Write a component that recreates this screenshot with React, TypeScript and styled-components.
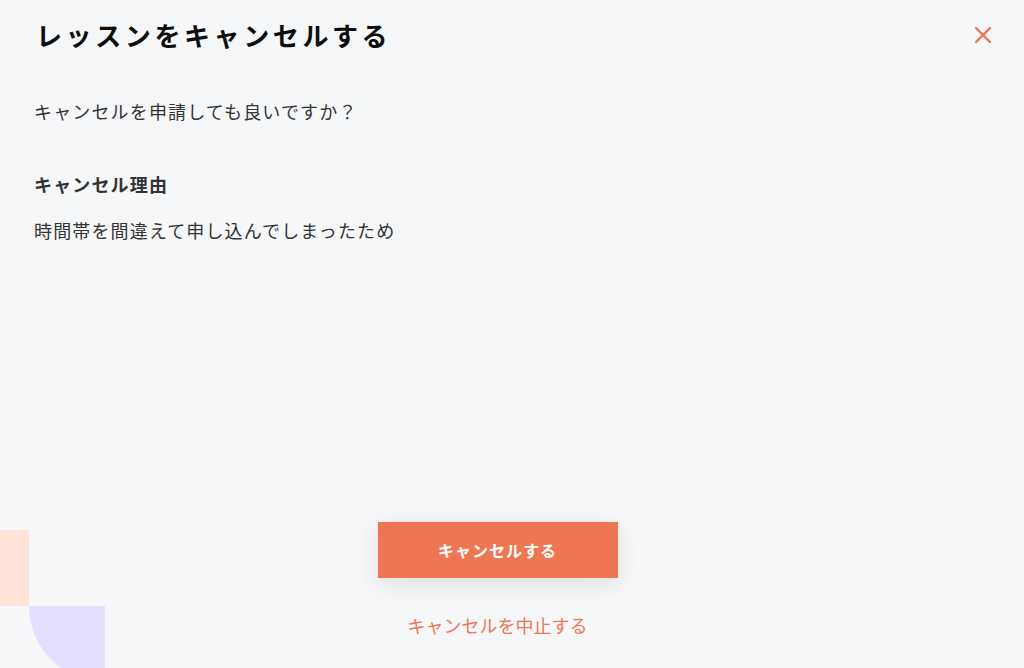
import React from "react";
import styled, { createGlobalStyle } from "styled-components";

const GlobalStyle = createGlobalStyle`
  html, body {
    margin: 0;
    padding: 0;
    background: #f6f7f9;
  }
  * { box-sizing: border-box; }
  body {
    font-family: "Noto Sans CJK JP", "Noto Sans", sans-serif;
  }
`;

const Page = styled.div`
  position: relative;
  height: 668px;
  overflow: hidden;
  display: flex;
  flex-direction: column;
  background: #f6f7f9;
`;

const Header = styled.header`
  display: flex;
  align-items: center;
  justify-content: space-between;
  padding: 10px 28px 0 36px;
  height: 60px;
`;

const Title = styled.h1`
  margin: 0;
  font-size: 26px;
  font-weight: 700;
  letter-spacing: 3.6px;
  color: #0d0d0d;
  line-height: 1;
`;

const CloseButton = styled.button`
  width: 26px;
  height: 26px;
  padding: 0;
  border: none;
  background: transparent;
  display: flex;
  align-items: center;
  justify-content: center;
  cursor: pointer;
`;

const Body = styled.div`
  flex: 1;
  padding: 38px 34px 0;
`;

const Text = styled.p<{ $bold?: boolean }>`
  margin: 0;
  font-size: 18px;
  line-height: 26px;
  letter-spacing: 1.15px;
  font-weight: ${({ $bold }) => ($bold ? 700 : 400)};
  color: #333;
`;

const Question = styled(Text)`
  margin-bottom: 47px;
`;

const Label = styled(Text)`
  margin-bottom: 20px;
`;

const Actions = styled.div`
  display: flex;
  flex-direction: column;
  align-items: center;
  gap: 34px;
  padding-bottom: 30px;
  padding-right: 29px;
`;

const PrimaryButton = styled.button`
  width: 240px;
  height: 56px;
  border: none;
  background: #ee7653;
  color: #fff;
  font-family: inherit;
  font-size: 16px;
  font-weight: 700;
  letter-spacing: 1px;
  cursor: pointer;
  box-shadow: 0 6px 28px rgba(0, 0, 0, 0.1);
`;

const TextLink = styled.button`
  border: none;
  background: transparent;
  padding: 0;
  font-family: inherit;
  font-size: 18px;
  line-height: 26px;
  color: #ee7653;
  cursor: pointer;
`;

const Decor = styled.div`
  position: absolute;
  left: 0;
  bottom: 0;
  width: 105px;
  height: 138px;
  pointer-events: none;
`;

const PeachBlock = styled.div`
  position: absolute;
  left: 0;
  top: 0;
  width: 29px;
  height: 76px;
  background: #fde3da;
`;

const LavenderArc = styled.div`
  position: absolute;
  left: 29px;
  top: 76px;
  width: 76px;
  height: 76px;
  background: #e4dfff;
  border-bottom-left-radius: 76px;
`;

export default function App() {
  return (
    <>
      <GlobalStyle />
      <Page>
        <Header>
          <Title>レッスンをキャンセルする</Title>
          <CloseButton aria-label="閉じる">
            <svg width="18" height="18" viewBox="0 0 18 18">
              <path
                d="M2 2 L16 16 M16 2 L2 16"
                stroke="#ee7653"
                strokeWidth="2.4"
                strokeLinecap="round"
              />
            </svg>
          </CloseButton>
        </Header>

        <Body>
          <Question>キャンセルを申請しても良いですか？</Question>
          <Label $bold>キャンセル理由</Label>
          <Text>時間帯を間違えて申し込んでしまったため</Text>
        </Body>

        <Actions>
          <PrimaryButton>キャンセルする</PrimaryButton>
          <TextLink>キャンセルを中止する</TextLink>
        </Actions>

        <Decor>
          <PeachBlock />
          <LavenderArc />
        </Decor>
      </Page>
    </>
  );
}
